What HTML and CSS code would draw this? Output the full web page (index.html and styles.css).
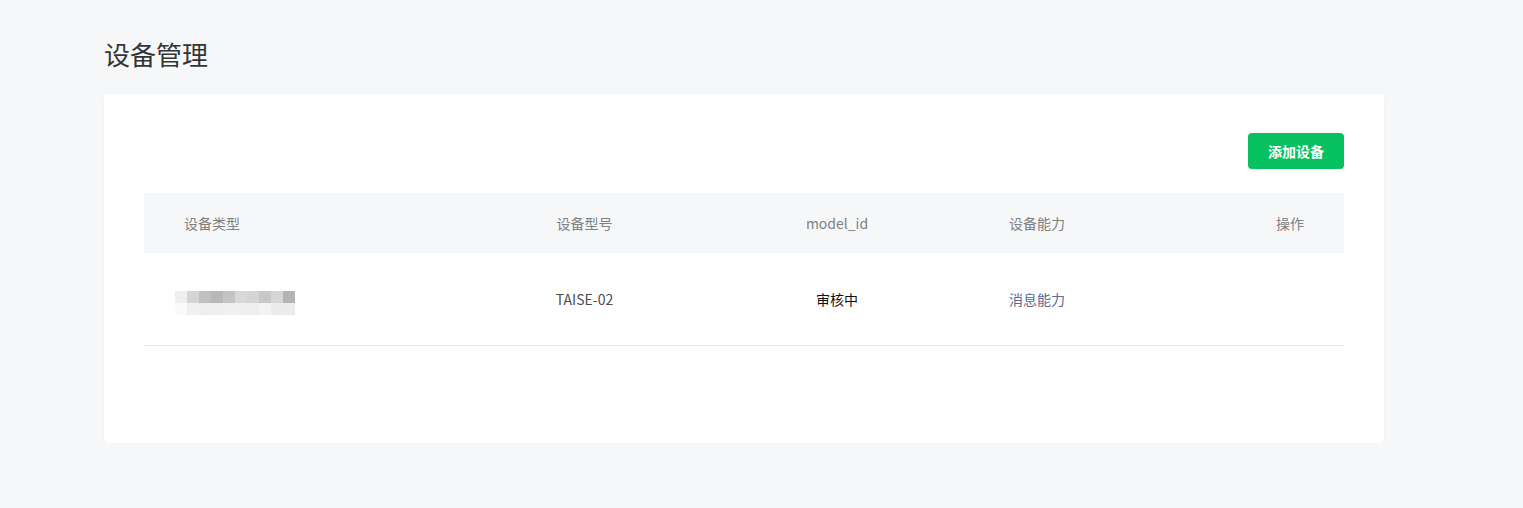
FILE: index.html
```html
<!DOCTYPE html>
<html lang="zh-CN">
<head>
  <meta charset="UTF-8">
  <title>设备管理</title>
  <link rel="stylesheet" href="styles.css">
</head>
<body>
<div class="page">
  <h1 class="page-title">设备管理</h1>

  <div class="card">
    <div class="toolbar">
      <button class="btn-primary">添加设备</button>
    </div>

    <div class="table">
      <div class="row head">
        <div class="cell left">设备类型</div>
        <div class="cell center">设备型号</div>
        <div class="cell center">model_id</div>
        <div class="cell left">设备能力</div>
        <div class="cell right">操作</div>
      </div>
      <div class="row body">
        <div class="cell left">
          <!-- masked device name -->
          <div class="mosaic">
            <span style="background:#efefef"></span><span style="background:#d4d4d4"></span><span style="background:#c0c0c0"></span><span style="background:#b8b8b8"></span><span style="background:#c4c4c4"></span><span style="background:#d8d8d8"></span><span style="background:#d4d4d4"></span><span style="background:#c8c8c8"></span><span style="background:#d6d6d6"></span><span style="background:#b4b4b4"></span>
            <span style="background:#fafafa"></span><span style="background:#f0f0f0"></span><span style="background:#eeeeee"></span><span style="background:#efefef"></span><span style="background:#f0f0f0"></span><span style="background:#efefef"></span><span style="background:#efefef"></span><span style="background:#f3f3f3"></span><span style="background:#ebebeb"></span><span style="background:#ececec"></span>
          </div>
        </div>
        <div class="cell center">TAISE-02</div>
        <div class="cell center status">审核中</div>
        <div class="cell left"><a class="link" href="#">消息能力</a></div>
        <div class="cell right"></div>
      </div>
    </div>
  </div>
</div>
</body>
</html>
```

FILE: styles.css
```css
html, body {
  margin: 0;
  padding: 0;
  background: #f6f7f9;
  font-family: "Noto Sans CJK SC", "Liberation Sans", sans-serif;
  color: #353535;
}
.page {
  padding: 34px 0 0 104px;
  width: 1280px;
}
.page-title {
  margin: 0 0 20px;
  font-size: 26px;
  font-weight: normal;
  line-height: 40px;
  color: #353535;
}
.card {
  background: #fff;
  border-radius: 4px;
  box-shadow: 0 1px 3px rgba(0, 0, 0, 0.04);
  padding: 39px 40px 97px;
}
.toolbar {
  display: flex;
  justify-content: flex-end;
  margin-bottom: 24px;
}
.btn-primary {
  width: 96px;
  height: 36px;
  border: 0;
  border-radius: 4px;
  background: #07c160;
  color: #fff;
  font-family: inherit;
  font-size: 14px;
  font-weight: bold;
  cursor: pointer;
}
.row {
  display: grid;
  grid-template-columns: 320px 241px 264px 231px 1fr;
  align-items: center;
  font-size: 14px;
}
.row.head {
  height: 60px;
  background: #f6f7f9;
  color: #808080;
}
.row.body {
  height: 92px;
  border-bottom: 1px solid #e5e5e5;
  color: #4d4d4d;
}
.cell {
  padding: 0 40px;
}
.cell.left { text-align: left; }
.cell.center { text-align: center; padding: 0; }
.cell.right { text-align: right; }
.status {
  color: #111;
}
.link {
  color: #576b95;
  text-decoration: none;
}
.mosaic {
  display: grid;
  grid-template-columns: repeat(10, 12px);
  grid-auto-rows: 12px;
  margin: 8px 0 0 -9px;
}
```
